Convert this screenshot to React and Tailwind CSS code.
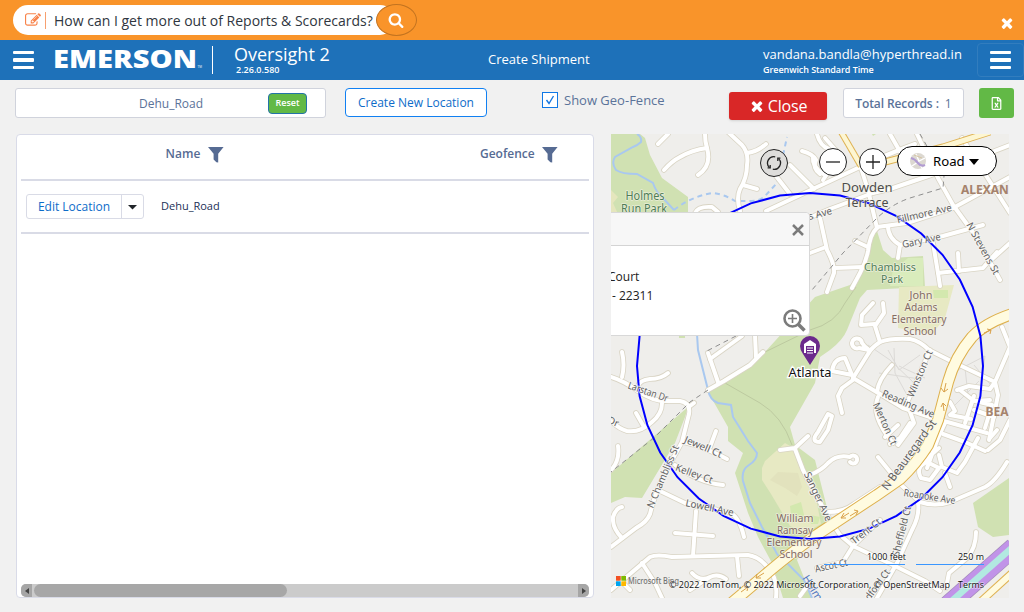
import React from "react";
import { FaRegFileExcel } from "react-icons/fa";

const ICONS = {
  times:
    "M1490 1322q0 40-28 68l-136 136q-28 28-68 28t-68-28l-294-294-294 294q-28 28-68 28t-68-28l-136-136q-28-28-28-68t28-68l294-294-294-294q-28-28-28-68t28-68l136-136q28-28 68-28t68 28l294 294 294-294q28-28 68-28t68 28l136 136q28 28 28 68t-28 68l-294 294 294 294q28 28 28 68z",
  search:
    "M1216 832q0-185-131.5-316.5t-316.5-131.5-316.5 131.5-131.5 316.5 131.5 316.5 316.5 131.5 316.5-131.5 131.5-316.5zm512 832q0 52-38 90t-90 38q-54 0-90-38l-343-342q-179 124-399 124-143 0-273.5-55.5t-225-150-150-225-55.5-273.5 55.5-273.5 150-225 225-150 273.5-55.5 273.5 55.5 225 150 150 225 55.5 273.5q0 220-124 399l343 343q37 37 37 90z",
  edit:
    "M888 1184l116-116-152-152-116 116v56h96v96h56zm440-720q-16-16-33 1l-350 350q-17 17-1 33t33-1l350-350q17-17 1-33zm80 594v190q0 119-84.5 203.5t-203.5 84.5h-832q-119 0-203.5-84.5t-84.5-203.5v-832q0-119 84.5-203.5t203.5-84.5h832q63 0 117 25 15 7 18 23 3 17-9 29l-49 49q-14 14-32 8-23-6-45-6h-832q-66 0-113 47t-47 113v832q0 66 47 113t113 47h832q66 0 113-47t47-113v-126q0-13 9-22l64-64q15-15 35-7t20 29zm-96-738l288 288-672 672h-288v-288zm444 132l-92 92-288-288 92-92q28-28 68-28t68 28l152 152q28 28 28 68t-28 68z",
};

function Icon({ name, className }) {
  return (
    <svg viewBox="0 0 1792 1792" className={className} fill="currentColor">
      <path d={ICONS[name]} />
    </svg>
  );
}

function Bars({ className }) {
  return (
    <div className={`flex flex-col gap-1 ${className}`}>
      <span className="h-[3.5px] rounded-[1px] bg-white" />
      <span className="h-[3.5px] rounded-[1px] bg-white" />
      <span className="h-[3.5px] rounded-[1px] bg-white" />
    </div>
  );
}

function Funnel() {
  return (
    <svg viewBox="0 0 16 16" className="h-4 w-4 shrink-0" fill="#566b93">
      <path d="M0 0H15.6L10.2 6.8V15.6L8.4 15.2L5.6 12.6V6.8Z" />
    </svg>
  );
}

const ROADS = [
  "M658 144L668 134",
  "M664 170Q672 161 680 157Q692 150 707 148",
  "M705 134Q705 142 707 148Q712 166 698 175",
  "M728 132L742 145Q749 153 747 165Q747 178 740 189Q736 198 740 211",
  "M747 153Q757 152 766 144",
  "M743 185L757 189",
  "M695 213Q698 206 712 207L718 212",
  "M776 176L790 194",
  "M790 165L814 189",
  "M802 151Q813 154 816 160Q812 168 820 174",
  "M766 211L815 188L860 167Q885 155 915 144",
  "M792 225L830 209L873 193L890 189L943 171L1010 145",
  "M817 134Q820 146 829 149",
  "M825 138L840 155L823 180",
  "M813 158Q812 166 823 174",
  "M890 134L902 155",
  "M860 165L868 190L877 228",
  "M917 134L938 178L953 205L977 238L1000 280",
  "M962 138L1010 213",
  "M877 227L907 223L953 208L1010 177",
  "M900 245L943 236L983 225",
  "M888 226Q888 238 900 245L898 258",
  "M933 243L938 273L940 286",
  "M938 273L983 268Q988 262 997 252L990 261L1010 243",
  "M958 253L959 271",
  "M877 228Q870 234 868 251Q866 262 860 273L852 288",
  "M835 268L863 267",
  "M820 218L827 250Q835 265 834 273L827 292",
  "M810 253L826 247",
  "M855 241L868 247",
  "M622 352Q625 365 622 377",
  "M611 377Q624 381 638 391Q654 402 668 401L680 401Q691 403 689 414L682 442L665 473Q655 493 650 514Q647 522 636 528L611 547",
  "M638 386Q640 380 650 379Q661 379 668 373",
  "M662 403Q662 414 652 422Q640 433 627 431Q619 429 611 421",
  "M636 413L644 427",
  "M690 406L694 403",
  "M708 390L724 381L750 365L763 352",
  "M708 353L718 382",
  "M710 359L742 336",
  "M755 335L756 357",
  "M716 431L710 447",
  "M683 442Q700 445 727 459",
  "M675 465Q699 483 723 485",
  "M660 491L685 503L728 512Q739 515 744 537",
  "M696 511L693 556",
  "M675 533L713 536",
  "M611 590L650 557Q657 554 672 557L748 555Q760 557 768 568Q778 578 776 598",
  "M737 556L739 576",
  "M642 563L655 583L662 598",
  "M622 538Q612 528 613 517Q616 508 622 507",
  "M618 446Q620 461 611 470",
  "M692 573Q700 582 710 577Q718 573 726 579M710 577L690 590",
  "M630 590L624 584",
  "M780 450L795 448L808 436M795 449L803 470L817 497L830 520L840 535L853 546L893 565L925 581L940 591",
  "M810 475Q822 470 828 463Q837 454 850 457A4 4 0 1 1 850 462",
  "M828 512Q844 512 854 504L880 487",
  "M878 457L900 484L920 502Q935 507 950 502L985 487Q995 482 1007 462",
  "M918 503Q920 515 912 530L897 563L877 598",
  "M853 546L880 520",
  "M817 568L843 562L853 546",
  "M976 532Q976 548 967 558L949 573L946 588",
  "M873 303L862 315L861 325L875 324",
  "M883 303L884 313L875 326L880 342Q871 348 868 354L853 378",
  "M880 342Q890 338 910 339Q920 341 929 350L953 362L995 382L1010 347L1002 327",
  "M853 378L885 397L903 408L933 418L987 433",
  "M877 392Q878 380 892 365",
  "M930 350L907 403L914 423L898 445",
  "M878 397Q870 416 893 443",
  "M852 375L832 371Q834 358 845 358L852 375",
  "M868 349Q864 346 862 343A5 5 0 1 0 859 348L869 350",
  "M853 380L842 388L838 396L842 413",
  "M828 414L818 432Q810 442 820 442L828 430L832 416Z",
  "M957 390L969 386L990 389L995 382",
  "M960 390L974 401L990 400M965 423L974 396M975 401L992 405L985 428M950 402L955 411L950 415L971 419M974 410L994 417",
  "M995 382L998 395L989 440",
  "M927 445Q920 444 918 453L898 472M918 453L925 460L939 448M945 423L938 438L927 468",
  "M921 478Q915 467 927 462L939 468L930 480ZM939 455L942 467L957 473L965 462L978 438M945 473L950 487",
  "M890 444L900 438L910 423",
  "M885 437L898 425",
  "M943 434L965 442L985 451",
  "M1010 420L1000 440L988 450",
  "M990 438L997 430",
  "M800 596L808 585",
];

const PATHS = [
  "M868 345L890 360L914 383M888 350L899 370L920 355M894 348L895 373L907 395M879 373L920 379M899 366L925 378",
  "M949 392L958 370L985 356L981 382M965 368L968 395M974 365L990 384M955 405L979 381",
  "M725 383L760 403Q782 416 792 445",
  "M765 352L810 330Q836 323 845 303L856 287",
];

const LABELS = [
  { t: "Fillmore Ave", x: 925, y: 217, r: -13, w: 56 },
  { t: "Gary Ave", x: 922, y: 244, r: -12, w: 39 },
  { t: "N Stevens St", x: 980, y: 250, r: 61, w: 58 },
  { t: "s Ave", x: 821, y: 217, r: -15, w: 24 },
  { t: "Larstan Dr", x: 647, y: 395, r: 19, w: 42 },
  { t: "Dr", x: 612, y: 425, r: 23, w: 11 },
  { t: "Jewell Ct", x: 702, y: 450, r: 23, w: 40 },
  { t: "Kelley Ct", x: 693, y: 477, r: 20, w: 39 },
  { t: "Lowell Ave", x: 709, y: 511, r: 12, w: 49 },
  { t: "N Chambliss St", x: 666, y: 478, r: -67, w: 67 },
  { t: "Winston Ct", x: 923, y: 375, r: -67, w: 50 },
  { t: "Reading Ave", x: 907, y: 407, r: 23, w: 56 },
  { t: "Merton Ct", x: 882, y: 425, r: 66, w: 45 },
  { t: "N Beauregard St", x: 912, y: 457, r: -54, w: 84, s: 11.5 },
  { t: "Sanger Ave", x: 815, y: 498, r: 65, w: 53 },
  { t: "Roanoke Ave", x: 929, y: 500, r: 9, w: 52 },
  { t: "Trent Ct", x: 868, y: 534, r: -38, w: 35 },
  { t: "Sheffield Ct", x: 905, y: 532, r: -76, w: 51 },
  { t: "Ascot Ct", x: 832, y: 569, r: -12, w: 33 },
  { t: "Radford Ct", x: 877, y: 591, r: -54, w: 46 },
];

const PLACES = [
  { t: "Holmes", x: 645, y: 200, w: 39, c: "#4f7d56" },
  { t: "Run Park", x: 644, y: 213, w: 46, c: "#4f7d56" },
  { t: "Chambliss", x: 890, y: 271, w: 52, c: "#4f7d56", s: 11.5 },
  { t: "Park", x: 892, y: 283, w: 22, c: "#4f7d56", s: 11.5 },
  { t: "John", x: 921, y: 299, w: 23 },
  { t: "Adams", x: 921, y: 311, w: 33 },
  { t: "Elementary", x: 919, y: 323, w: 55 },
  { t: "School", x: 920, y: 335, w: 33 },
  { t: "William", x: 795, y: 522, w: 37 },
  { t: "Ramsay", x: 795, y: 534, w: 36 },
  { t: "Elementary", x: 794, y: 546, w: 55 },
  { t: "School", x: 796, y: 558, w: 33 },
];

const FENCE = Array.from({ length: 36 }, (_, i) => {
  const a = (i * Math.PI) / 18;
  return `${(810 + 173 * Math.sin(a)).toFixed(1)},${(366 - 173 * Math.cos(a)).toFixed(1)}`;
}).join(" ");

function RoadLayer({ paths, casing, fill, outer, inner }) {
  return (
    <g fill="none" strokeLinecap="round" strokeLinejoin="round">
      {paths.map((d) => (
        <path key={`c${d}`} d={d} stroke={casing} strokeWidth={outer} />
      ))}
      {paths.map((d) => (
        <path key={`f${d}`} d={d} stroke={fill} strokeWidth={inner} />
      ))}
    </g>
  );
}

function MapCanvas() {
  return (
    <svg viewBox="611 134 398 464" className="block h-full w-full" fontFamily="'Noto Sans', sans-serif">
      <rect x="611" y="134" width="398" height="464" fill="#efeeeb" />
      <g fill="#d0e1b2">
        <path d="M611 134H640L645 138L650 155L662 178L688 197V214H611Z" />
        <path d="M877 231L883 250L892 258L923 256L925 287L867 290L860 298L847 330Q843 340 830 350L820 357L815 383L790 427L795 445L815 460L830 520L805 542L797 560L812 598H783L772 563L758 537L748 513L735 473L743 453L728 441V427L708 392L725 383L748 366L765 352L815 297L850 285L863 270L870 240Z" />
        <path d="M611 473L688 407L685 417L675 443L642 498L625 497L611 503Z" />
        <path d="M973 503L1009 478V535L993 537L978 527Z" />
        <path d="M679 336H685V338H679Z" />
        <path d="M872 134H876L873 136Z" />
      </g>
      <path d="M611 190L618 197L613 203L618 214H611Z" fill="#e5e6bd" />
      <path d="M908 258H923V286H890L893 270Z" fill="#d9ecbc" />
      <g fill="#e7e9c3">
        <path d="M899 287L954 285L945 318L932 334L898 328Z" />
        <path d="M762 468L765 461L785 443L797 450L815 493L821 524L805 533L790 526L771 494L762 480Z" />
      </g>
      <path d="M770 480L778 472L798 473L802 487L797 496L785 488Z" fill="#e2e2bd" />
      <path d="M790 506L801 502L805 519L792 523ZM933 290H948V298H934ZM810 515L820 517L818 524H811Z" fill="#d3e8ae" />

      <g fill="none" stroke="#a9c8ef" strokeWidth="2">
        <path d="M637 134Q642 137 641 142Q638 145 633 147L615 157Q611 163 616 170Q622 174 637 174L653 183Q656 192 662 197L674 210" />
        <path d="M674 210Q690 197 712 193Q724 194 735 201H752Q760 201 765 196L777 183L787 137" strokeDasharray="5 4" />
        <path d="M697 334L698 350L708 390Q710 400 718 403L731 405L733 417L748 441L757 453Q757 460 749 465Q741 470 743 481L750 503L762 527L775 550Q778 558 787 563L804 580L812 598" />
      </g>
      <g fill="none" stroke="#dddcd8" strokeWidth="1">
        {PATHS.map((d) => (
          <path key={d} d={d} stroke={d.startsWith("M7") ? "#bdcaa0" : "#dcdad7"} />
        ))}
      </g>

      <RoadLayer paths={ROADS} casing="#d9d4c4" fill="#ffffff" outer={5.6} inner={4} />

      <g fill="none" stroke="#8f8f8f" strokeWidth="1" strokeDasharray="5 4">
        <path d="M920 134L944 176L943 188L910 198Q892 204 877 218L843 253L812 290" />
        <path d="M736 336L705 352M708 390L690 402L655 437L611 472" />
      </g>

      <g fill="none">
        <path d="M840 130L861 166" stroke="#dfb252" strokeWidth="6.5" />
        <path d="M840 130L861 166" stroke="#fdf6d2" strokeWidth="4.5" />
        <path d="M885 162L943 147L990 132" stroke="#dfb252" strokeWidth="7" />
        <path d="M885 162L943 147L990 132" stroke="#fdf6d2" strokeWidth="5" />
        <path d="M728 606L772 569Q790 554 812 538L877 495L900 479Q916 464 928 445L938 420L948 382Q955 357 972 337Q985 323 1012 314" stroke="#deb04c" strokeWidth="12" />
        <path d="M728 606L772 569Q790 554 812 538L877 495L900 479Q916 464 928 445L938 420L948 382Q955 357 972 337Q985 323 1012 314" stroke="#fffbe0" strokeWidth="10" />
        <path d="M978 604L1012 573" stroke="#dfb252" strokeWidth="8" />
        <path d="M978 604L1012 573" stroke="#fffbe0" strokeWidth="6" />
        <path d="M948 605L1014 547" stroke="#a28ab9" strokeWidth="19.5" />
        <path d="M948 605L1014 547" stroke="#c193e8" strokeWidth="18" />
        <path d="M946 606L1014 546" stroke="#b2e9e1" strokeWidth="6.5" />
      </g>
      <g fill="none" stroke="#d9a14a" strokeWidth="1">
        <path d="M946 383L944 392M941 388L944 392L948 389M944 411L943 403M941 407L943 403L946 406" />
        <path d="M984 333L991 330M987 329L991 330L990 334" />
        <path d="M841 518L849 513M844 513L841 518L846 518M850 516L858 511M854 510L858 511L856 515" />
        <path d="M756 578L764 573M757 574L756 578L761 578M741 592L748 587M744 587L748 587L747 591" />
      </g>

      <polygon points={FENCE} fill="none" stroke="#0000ff" strokeWidth="2" />

      <g textAnchor="middle" fontSize="10" fill="#5f5f5f" stroke="#f7f6f4" strokeWidth="2" paintOrder="stroke" strokeLinejoin="round" strokeOpacity="0.75">
        {LABELS.map((l) => (
          <text
            key={l.t}
            x={l.x}
            y={l.y}
            fontSize={l.s || 10}
            textLength={l.w}
            lengthAdjust="spacingAndGlyphs"
            transform={`rotate(${l.r} ${l.x} ${l.y})`}
          >
            {l.t}
          </text>
        ))}
      </g>
      <g textAnchor="middle" stroke="#f5f3e9" strokeWidth="1.6" strokeOpacity="0.7" paintOrder="stroke" strokeLinejoin="round">
        {PLACES.map((p, i) => (
          <text key={i} x={p.x} y={p.y} fontSize={p.s || (p.c ? 12 : 10.8)} textLength={p.w} lengthAdjust="spacingAndGlyphs" fill={p.c || "#846b63"}>
            {p.t}
          </text>
        ))}
        <text x="867" y="192" fontSize="13" textLength="51" lengthAdjust="spacingAndGlyphs" fill="#4d4d4d">Dowden</text>
        <text x="867" y="207" fontSize="13" textLength="43" lengthAdjust="spacingAndGlyphs" fill="#4d4d4d">Terrace</text>
      </g>
      <g fill="#a5826c" fontWeight="700" fontSize="12">
        <text x="961" y="194">ALEXAN</text>
        <text x="985.5" y="416">BEA</text>
      </g>
      <text x="802" y="578" fontSize="11" fill="#4f76c0" transform="rotate(58 802 578)">Holmes</text>

      <path d="M810 365L803 354Q800 350 800 346A10 10 0 0 1 820 346Q820 350 817 354Z" fill="#6b2a8c" />
      <path d="M804 353V344L810 340L816 344V353H814V346H806V353Z" fill="#fff" />
      <path d="M807 348H813M807 350.5H813M807 353H813" stroke="#fff" strokeWidth="1.2" />
      <text x="810" y="377" textAnchor="middle" fontSize="12.5" textLength="43" lengthAdjust="spacingAndGlyphs" fill="#111" stroke="#fff" strokeWidth="2.5" paintOrder="stroke">
        Atlanta
      </text>

      <g>
        <rect x="616" y="576" width="4.7" height="4.7" fill="#f25022" />
        <rect x="621.3" y="576" width="4.7" height="4.7" fill="#7fba00" />
        <rect x="616" y="581.3" width="4.7" height="4.7" fill="#00a4ef" />
        <rect x="621.3" y="581.3" width="4.7" height="4.7" fill="#ffb900" />
        <text x="628" y="584" fontSize="8.5" fontWeight="500" textLength="51" lengthAdjust="spacingAndGlyphs" fill="#737373">Microsoft Bing</text>
      </g>
      <g fill="#111" fontSize="9.5" fontFamily="'Open Sans', sans-serif" stroke="#fff" strokeWidth="1.5" strokeOpacity="0.5" paintOrder="stroke">
        <text x="669" y="588" textLength="281" lengthAdjust="spacingAndGlyphs">© 2022 TomTom, © 2022 Microsoft Corporation, © OpenStreetMap</text>
        <text x="958" y="588" textLength="26" lengthAdjust="spacingAndGlyphs">Terms</text>
        <text x="867" y="560" textLength="39" lengthAdjust="spacingAndGlyphs">1000 feet</text>
        <text x="958" y="560" textLength="26" lengthAdjust="spacingAndGlyphs">250 m</text>
      </g>
      <path d="M824 564.5H905M916 564.5H984" stroke="#3a96ff" strokeWidth="1.2" />
    </svg>
  );
}

function MapPanel() {
  return (
    <section className="relative h-[464px] w-[398px] overflow-hidden">
      <MapCanvas />

      <div className="absolute -left-10 top-[78px] flex h-[124px] w-[239px] flex-col rounded-[4px] border border-[#d8d8d8] bg-white">
        <div className="flex h-[33px] shrink-0 items-center justify-end rounded-t-[4px] border-b border-[#d4d4d4] bg-[#f7f7f7] pr-[5px]">
          <svg viewBox="0 0 12 12" className="mt-px h-3 w-3" stroke="#7b7b7b" strokeWidth="2.5">
            <path d="M1 1L11 11M11 1L1 11" />
          </svg>
        </div>
        <div className="flex flex-1 justify-between pl-[38px] pr-[3px] pt-[21px] text-[12px] leading-[19px] text-[#222]">
          <div>
            <div className="-ml-[2px]">Court</div>
            <div className="pl-[2px]">- 22311</div>
          </div>
          <svg viewBox="0 0 23 23" className="mt-[42px] h-[23px] w-[23px]" fill="none" stroke="#7b7b7b">
            <circle cx="9.5" cy="9.5" r="8" strokeWidth="2.6" />
            <path d="M15.5 15.5L21.5 21.5" strokeWidth="3.6" />
            <path d="M9.5 5V14M5 9.5H14" strokeWidth="1.6" />
          </svg>
        </div>
      </div>

      <div className="absolute left-[149px] top-[15px] flex size-[28px] items-center justify-center rounded-full border border-[#222] bg-[#dedddb]">
        <svg viewBox="0 0 16 16" className="size-4" fill="none" stroke="#222" strokeWidth="1.3">
          <path d="M9.2 1.8A6.3 6.3 0 0 0 3.4 12.4M6.8 14.2A6.3 6.3 0 0 0 12.6 3.6" />
          <path d="M1.6 12.8H4.2V10M14.4 3.2H11.8V6" />
        </svg>
      </div>
      <div className="absolute left-[208px] top-[14px] flex size-[28px] items-center justify-center rounded-full border-[1.5px] border-[#222] bg-white">
        <svg viewBox="0 0 16 16" className="size-4 shrink-0" stroke="#222" strokeWidth="1.3">
          <path d="M1 8H15" />
        </svg>
      </div>
      <div className="absolute left-[248px] top-[14px] flex size-[28px] items-center justify-center rounded-full border-[1.5px] border-[#222] bg-white">
        <svg viewBox="0 0 16 16" className="size-4 shrink-0" stroke="#222" strokeWidth="1.3">
          <path d="M1 8H15M8 1V15" />
        </svg>
      </div>
      <div className="absolute left-[286px] top-[12px] flex h-[30px] w-[100px] items-center rounded-full border border-black bg-white pl-3 font-['Noto_Sans',sans-serif] text-[13.2px] text-black">
        <svg viewBox="0 0 16 16" className="size-4">
          <circle cx="8" cy="8" r="8" fill="#dcd8d1" />
          <path d="M2 13L8 9L12 15M6 1L9 8L15 5" stroke="#fff" strokeWidth="1.3" fill="none" />
          <path d="M1 5Q5 6 8 10T15 12" stroke="#b19bd2" strokeWidth="2.2" fill="none" />
          <path d="M4 2L12 5" stroke="#d6c6a4" strokeWidth="1" />
        </svg>
        <span className="ml-[7px] mt-[2px] w-[31px]">Road</span>
        <svg viewBox="0 0 10 6" className="ml-[5px] mt-px h-[6px] w-[10px]">
          <path d="M0 0H10L5 6Z" />
        </svg>
      </div>
    </section>
  );
}

function LocationTable() {
  return (
    <section className="flex h-[464px] w-[578px] flex-col rounded-[4px] border border-[#d9dbe8] bg-white px-1">
      <div className="flex h-[46px] border-b-2 border-[#d9dbe6] pt-3 text-[12px] font-semibold leading-[14px] text-[#566b93]">
        <div className="flex w-[315px] gap-2 pl-[144.6px]">
          <span className="w-[34px]">Name</span>
          <Funnel />
        </div>
        <div className="flex gap-2 pl-[144px]">
          <span className="w-[54px]">Geofence</span>
          <Funnel />
        </div>
      </div>
      <div className="flex h-[53px] shrink-0 items-center border-b-2 border-[#d9dbe6] pl-[5px]">
        <div className="flex h-[25px] w-[118px] rounded-[3px] border border-[#d9dbe6] text-[12px] text-[#0d6cc9]">
          <span className="flex w-[95px] items-center justify-center border-r border-[#d9dbe6]">Edit Location</span>
          <span className="flex flex-1 items-center justify-center pt-[2px]">
            <svg viewBox="0 0 9 5" className="h-[5px] w-[9px]" fill="#212529">
              <path d="M0 0H9L4.5 4.5Z" />
            </svg>
          </span>
        </div>
        <span className="ml-[17px] text-[11px] text-[#223056]">Dehu_Road</span>
      </div>
      <div className="mt-auto flex h-[13px] w-full items-stretch overflow-hidden rounded-[5px] bg-[#cbcbcb]">
        <span className="flex w-[11px] items-center justify-center bg-[#a6a6a6]">
          <svg viewBox="0 0 4 6" className="h-[6px] w-1" fill="#444"><path d="M4 0V6L0 3Z" /></svg>
        </span>
        <span className="ml-[2px] w-[253px] rounded-full bg-[#a7a7a7]" />
        <span className="ml-auto flex w-[11px] items-center justify-center bg-[#a6a6a6]">
          <svg viewBox="0 0 4 6" className="h-[6px] w-1" fill="#444"><path d="M0 0V6L4 3Z" /></svg>
        </span>
      </div>
    </section>
  );
}

export default function App() {
  return (
    <div className="flex h-[612px] w-[1024px] flex-col overflow-hidden bg-[#f1f1f1] font-['Open_Sans',sans-serif]">
      <div className="flex h-10 shrink-0 items-center justify-between bg-[#f9942a] pl-[13px] pr-[9px]">
        <div className="flex items-center">
          <div className="flex h-[30px] w-[382px] items-center rounded-full bg-white pl-3">
            <Icon name="edit" className="size-4 text-[#f8834a]" />
            <span className="ml-1 h-[17px] w-px bg-[#f7a070]" />
            <span className="ml-[8px] mt-px whitespace-nowrap text-[14px] text-[#2f3640]">
              How can I get more out of Reports &amp; Scorecards?
            </span>
          </div>
          <div className="-ml-[19px] flex h-8 w-[41px] items-center justify-center rounded-[50%] border border-[#c27320] bg-[#f9942a]">
            <Icon name="search" className="size-4 -translate-x-px text-white" />
          </div>
        </div>
        <Icon name="times" className="mt-[5px] size-[16px] text-white" />
      </div>

      <header className="flex h-10 shrink-0 items-center bg-[#1e71b9] text-white">
        <Bars className="ml-[13px] w-[21px]" />
        <svg className="ml-5 h-10 w-[150px]" viewBox="0 0 150 40">
          <text x="-1" y="27.7" fontSize="24" fontWeight="800" fontFamily="'Open Sans', sans-serif" textLength="144" lengthAdjust="spacingAndGlyphs" fill="#fff">
            EMERSON
          </text>
          <text x="143.5" y="27.5" fontSize="3" fill="#fff" fontFamily="'Open Sans', sans-serif">TM</text>
        </svg>
        <span className="ml-[8px] h-7 w-px bg-white" />
        <div className="ml-[21px] w-[100px]">
          <div className="-mt-px whitespace-nowrap text-[18px] leading-[20px]">Oversight 2</div>
          <div className="pl-[2px] pt-px text-[9px] font-semibold leading-[10px]">2.26.0.580</div>
        </div>
        <div className="ml-[154px] w-[103px] whitespace-nowrap text-[13px]">Create Shipment</div>
        <div className="ml-[172px] w-[200px] pt-[2px]">
          <div className="whitespace-nowrap text-[13px] leading-[17px]">vandana.bandla@hyperthread.in</div>
          <div className="text-[9px] font-semibold leading-[13px] tracking-[-0.07px]">Greenwich Standard Time</div>
        </div>
        <div className="ml-auto flex h-[34px] w-[47px] items-center rounded-[4px] border border-[#327dbe] pl-3">
          <Bars className="w-[21px]" />
        </div>
      </header>

      <div className="flex h-[54px] shrink-0 items-start pl-[15px] pt-2">
        <div className="flex h-[30px] w-[311px] items-center justify-between rounded-[3px] border border-[#d0d3dc] bg-white pl-[123px] pr-[18px] text-[12px] text-[#5b7399]">
          <span className="mt-px">Dehu_Road</span>
          <span className="flex h-[21px] w-[39px] items-center justify-center rounded-[4px] border border-[#2373a8] bg-[#62b946] text-[9px] font-semibold text-white">
            Reset
          </span>
        </div>
        <button className="ml-[19px] h-[29px] w-[142px] whitespace-nowrap rounded-[4px] border border-[#1180f2] bg-white text-[12px] text-[#0d6cc9]">
          Create New Location
        </button>
        <div className="ml-[55px] mt-1 flex h-4 items-center gap-[6px] text-[13px] text-[#5b7399]">
          <span className="flex size-4 items-center justify-center border border-[#0f78e6] bg-white">
            <svg viewBox="0 0 10 10" className="size-[10px]" fill="none" stroke="#1878e0" strokeWidth="1.4">
              <path d="M1.5 5L4 8.5L8.5 1" />
            </svg>
          </span>
          <span className="mt-[2px] w-[102px] whitespace-nowrap">Show Geo-Fence</span>
        </div>
        <button className="ml-[63px] mt-1 flex h-7 w-[98px] items-center justify-center gap-[3px] rounded-[3px] bg-[#d92727] text-[16px] tracking-[-0.2px] text-white shadow-sm">
          <Icon name="times" className="size-[16px]" />
          Close
        </button>
        <div className="ml-4 flex h-[30px] w-[121px] items-center justify-center whitespace-nowrap rounded-[3px] border border-[#d0d3dc] bg-white pt-px text-[12px] text-[#5b7399]">
          <span className="font-semibold tracking-[-0.1px]">Total Records :</span>
          <span className="ml-[6px]">1</span>
        </div>
        <button className="ml-[15px] flex h-[30px] w-[35px] items-center justify-center rounded-[3px] bg-[#62b946] text-white">
          <FaRegFileExcel className="size-[13px]" />
        </button>
      </div>

      <main className="flex gap-[17px] pl-4">
        <LocationTable />
        <MapPanel />
      </main>
    </div>
  );
}
